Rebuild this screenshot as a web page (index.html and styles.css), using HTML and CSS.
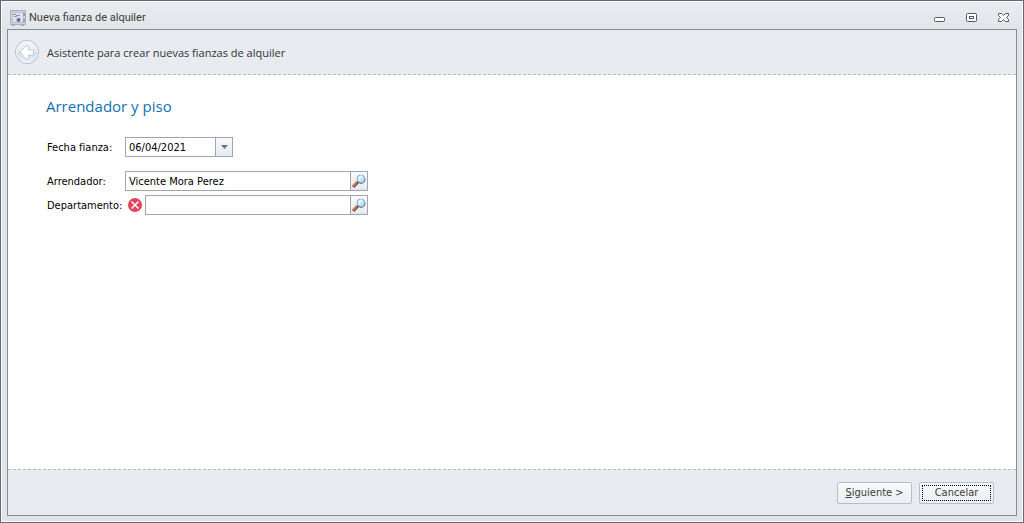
FILE: index.html
```
<!DOCTYPE html>
<html lang="es">
<head>
    <meta charset="UTF-8">
    <meta name="viewport" content="width=device-width, initial-scale=1.0">
    <title>Nueva fianza de alquiler</title>
    <link rel="stylesheet" href="styles.css">
</head>
<body>

    <div class="window">
        <header class="titlebar">
            <svg class="app-icon" width="16" height="16" viewBox="0 0 16 16">
                <path d="M2 15h3v1H2zM11 15h3v1h-3z" fill="#a3abb9"/>
                <rect x="0.5" y="0.5" width="15" height="14" fill="#ccd3df" stroke="#a9b1c0"/>
                <rect x="2.5" y="2.5" width="11" height="10" fill="#dde3ec" stroke="#bac2d0"/>
                <path d="M3 4.500h3M4 6.500h3M6 5.500h4" fill="none" stroke="#8b95a9"/>
                <circle cx="8.500" cy="10" r="2" fill="#667088"/>
                <path d="M13 3h2v3h-2zM13 9h2v3h-2z" fill="#929cae"/>
            </svg>
            <span class="title">Nueva fianza de alquiler</span>
            <div class="window-buttons">
                <button type="button" aria-label="Minimizar">
                    <svg width="12" height="12" viewBox="0 0 12 12">
                        <rect x="0.5" y="5.5" width="10" height="4" rx="1" fill="#fff" stroke="#535960"/>
                    </svg>
                </button>
                <button type="button" aria-label="Maximizar">
                    <svg width="12" height="12" viewBox="0 0 12 12">
                        <rect x="0.5" y="1.500" width="10" height="8" rx="1" fill="#fff" stroke="#535960"/>
                        <rect x="3.5" y="4.5" width="4" height="2" fill="#fff" stroke="#535960"/>
                    </svg>
                </button>
                <button type="button" aria-label="Cerrar">
                    <svg width="12" height="12" viewBox="0 0 12 12">
                        <path d="M0.500 1.500h3l2 2 2-2h3v2l-2 2 2 2v2h-3l-2-2-2 2h-3v-2l2-2-2-2z" fill="#fff" stroke="#535960"/>
                    </svg>
                </button>
            </div>
        </header>

        <form class="wizard">
            <div class="wizard-header">
                <button type="button" class="back" aria-label="Atrás" disabled>
                    <svg width="26" height="26" viewBox="0 0 26 26">
                        <defs>
                            <linearGradient id="disc" x1="0" y1="0" x2="0" y2="1">
                                <stop offset="0" stop-color="#f4f6f8"/>
                                <stop offset="0.5" stop-color="#e6ebf0"/>
                                <stop offset="0.5" stop-color="#d0dae4"/>
                                <stop offset="1" stop-color="#eef5fa"/>
                            </linearGradient>
                        </defs>
                        <circle cx="13" cy="13" r="11.500" fill="url(#disc)" stroke="#b4bac3"/>
                        <circle cx="13" cy="13" r="10.500" fill="none" stroke="#f4f7fa"/>
                        <path d="M6 13l6-6h2.500v4h5v5h-5v4H12z" fill="#fff" stroke="#bcc4ce" stroke-width="0.800" stroke-linejoin="round"/>
                    </svg>
                </button>
                <span>Asistente para crear nuevas fianzas de alquiler</span>
            </div>

            <main class="wizard-page">
                <h1>Arrendador y piso</h1>

                <div class="row row-date">
                    <label for="fecha">Fecha fianza:</label>
                    <div class="field field-date">
                        <input type="text" id="fecha" value="06/04/2021">
                        <button type="button" aria-label="Abrir calendario">
                            <svg width="7" height="4" viewBox="0 0 7 4">
                                <path d="M0 0h7L3.500 4z" fill="#6b727b"/>
                            </svg>
                        </button>
                    </div>
                </div>

                <div class="row">
                    <label for="arrendador">Arrendador:</label>
                    <div class="field">
                        <input type="text" id="arrendador" value="Vicente Mora Perez">
                        <button type="button" aria-label="Buscar arrendador">
                            <svg width="14" height="14" viewBox="0 0 14 14">
                                <path d="M2 12l3-3" stroke="#5a4a58" stroke-width="3" stroke-linecap="round"/>
                                <path d="M1.500 11.500l3-3" stroke="#e8763d" stroke-width="2" stroke-linecap="round"/>
                                <path d="M5 9l1.500-1.500" stroke="#4b5263" stroke-width="2"/>
                                <circle cx="9" cy="5" r="4" fill="#b5e8fa" stroke="#8fa3c6"/>
                                <path d="M7 5.500a2.500 2.500 0 0 1 3-3" fill="none" stroke="#fff" stroke-width="2"/>
                                <path d="M6 8a4 4 0 0 0 7-3" fill="none" stroke="#6678a0"/>
                            </svg>
                        </button>
                    </div>
                </div>

                <div class="row">
                    <label for="departamento">Departamento:</label>
                    <svg class="error-icon" width="14" height="14" viewBox="0 0 14 14" role="img" aria-label="Error">
                        <circle cx="7" cy="7" r="7" fill="#e3435c"/>
                        <path d="M3.500 3.500l7 7M10.500 3.500l-7 7" stroke="#fff" stroke-width="1.500"/>
                    </svg>
                    <div class="field">
                        <input type="text" id="departamento">
                        <button type="button" aria-label="Buscar departamento">
                            <svg width="14" height="14" viewBox="0 0 14 14">
                                <path d="M2 12l3-3" stroke="#5a4a58" stroke-width="3" stroke-linecap="round"/>
                                <path d="M1.500 11.500l3-3" stroke="#e8763d" stroke-width="2" stroke-linecap="round"/>
                                <path d="M5 9l1.500-1.500" stroke="#4b5263" stroke-width="2"/>
                                <circle cx="9" cy="5" r="4" fill="#b5e8fa" stroke="#8fa3c6"/>
                                <path d="M7 5.500a2.500 2.500 0 0 1 3-3" fill="none" stroke="#fff" stroke-width="2"/>
                                <path d="M6 8a4 4 0 0 0 7-3" fill="none" stroke="#6678a0"/>
                            </svg>
                        </button>
                    </div>
                </div>
            </main>

            <footer class="wizard-footer">
                <button type="button" class="btn"><span><u>S</u>iguiente &gt;</span></button>
                <button type="button" class="btn btn-focused"><span>Cancelar</span></button>
            </footer>
        </form>
    </div>

</body>
</html>
```
FILE: styles.css
```
* {
    box-sizing: border-box;
}

body {
    margin: 0;
    font-family: "DejaVu Sans Condensed", Tahoma, "DejaVu Sans", sans-serif;
    font-size: 11px;
    color: #000;
}

button, input {
    font: inherit;
    margin: 0;
    padding: 0;
}

svg {
    display: block;
}

.window {
    display: flex;
    flex-direction: column;
    min-height: 100vh;
    padding: 0 6px 6px;
    border: 1px solid #646a73;
    box-shadow: inset 0 0 0 1px #fff;
    background: linear-gradient(#eaecf0, #e1e5e8 30px);
}

.titlebar {
    display: flex;
    align-items: center;
    height: 28px;
    padding: 5px 7px 0 3px;
    font-family: Roboto, "Segoe UI", sans-serif;
    font-size: 11px;
    color: #3b3b3b;
}

.title {
    margin-left: 3px;
}

.window-buttons {
    display: flex;
    gap: 20px;
    margin-left: auto;
}

.window-buttons button {
    border: none;
    background: none;
}

.wizard {
    display: flex;
    flex-direction: column;
    flex: 1;
    border: 1px solid #868b91;
    background: #fff;
}

.wizard-header {
    display: flex;
    align-items: center;
    gap: 7px;
    height: 45px;
    padding: 0 6px;
    border-bottom: 1px dashed #b4b8c4;
    background: #e8ebf0;
    font-family: "Open Sans", "Segoe UI", sans-serif;
    font-size: 11px;
    color: #333;
}

.back {
    border: none;
    background: none;
}

.wizard-page {
    flex: 1;
    padding: 20px 38px;
}

h1 {
    margin: 0 0 20px;
    font-family: "Open Sans", "Segoe UI", sans-serif;
    font-size: 15px;
    font-weight: normal;
    line-height: 22px;
    color: #1170b3;
}

.row {
    display: flex;
    align-items: center;
    width: 322px;
    max-width: 100%;
    margin-bottom: 4px;
    padding-left: 1px;
}

.row-date {
    margin-bottom: 14px;
}

.row label {
    width: 78px;
    white-space: nowrap;
}

.field {
    display: flex;
    flex: 1;
    height: 20px;
    border: 1px solid #a1a5b3;
    background: #fff;
}

.field-date {
    flex: none;
    width: 108px;
}

.field input {
    flex: 1;
    min-width: 0;
    padding: 0 3px;
    border: none;
    outline: none;
    background: none;
}

.field button {
    display: flex;
    align-items: center;
    justify-content: center;
    width: 17px;
    border: none;
    border-left: 1px solid #a1a5b3;
    background: linear-gradient(#f8fafc, #e6eaef);
}

.error-icon {
    margin: 0 3px;
}

.wizard-footer {
    display: flex;
    align-items: center;
    justify-content: flex-end;
    gap: 7px;
    height: 46px;
    padding: 0 22px;
    border-top: 1px dashed #b4b8c4;
    background: #e8ebf0;
}

.btn {
    width: 75px;
    height: 22px;
    padding: 2px;
    border: 1px solid #b9bdc5;
    border-radius: 2px;
    background: linear-gradient(#f8fafc, #ebeef2);
    color: #3b3b3b;
}

.btn span {
    display: block;
    line-height: 16px;
}

.btn-focused span {
    outline: 1px dotted #000;
    outline-offset: -1px;
}
```
